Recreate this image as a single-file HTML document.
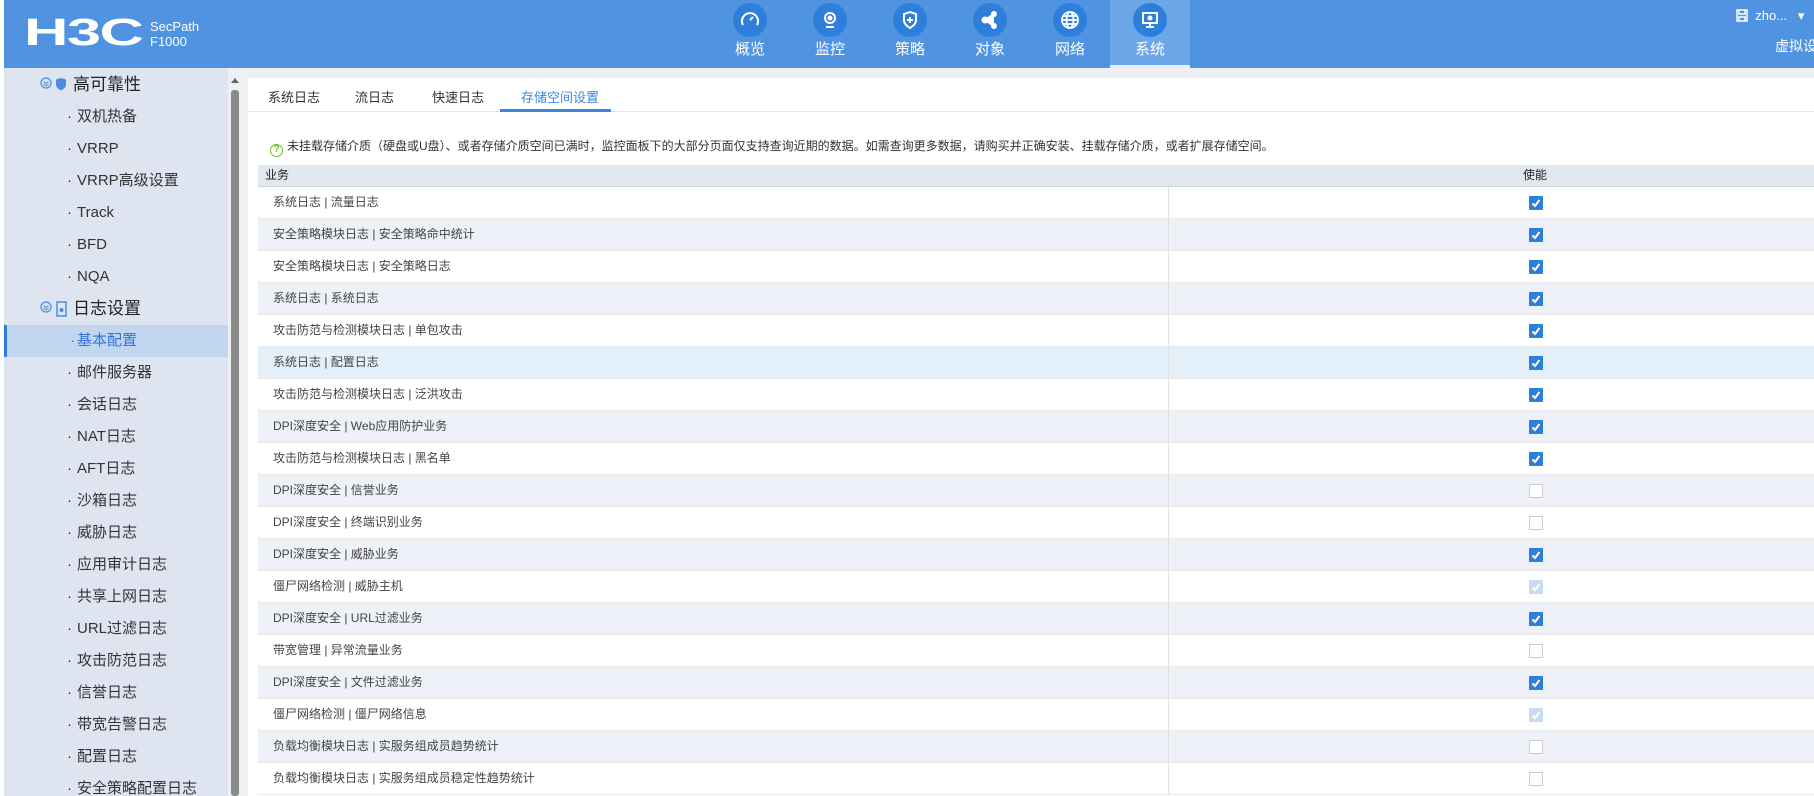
<!DOCTYPE html>
<html><head><meta charset="utf-8"><style>
*{margin:0;padding:0;box-sizing:border-box}
body{width:1814px;height:796px;overflow:hidden;background:#fff;font-family:"Liberation Sans","Noto Sans CJK SC",sans-serif;position:relative}
.hdr{position:absolute;left:4px;top:0;width:1810px;height:68px;background:#5093e0}
.logo{position:absolute;left:20px;top:12px;color:#fff;font:bold 38px "Liberation Sans",sans-serif;transform:scaleX(1.62);transform-origin:left;letter-spacing:-1px}
.sp{position:absolute;left:146px;top:19px;color:#fff;font-size:13px;line-height:15px}
.nav{position:absolute;top:0;width:80px;height:68px;text-align:center;color:#fff;font-size:15px}
.nav .c{width:34px;height:34px;border-radius:50%;background:#2e7fdc;margin:3px auto 0;display:flex;align-items:center;justify-content:center}
.nav .t{margin-top:1px}
.nav.act{background:#6aa6e8;border-bottom:3px solid #e8f0fb}
.user{position:absolute;left:1736px;top:8px;color:#fff;font-size:13px}
.vd{position:absolute;left:1775px;top:36px;color:#fff;font-size:14px;white-space:nowrap}
.side{position:absolute;left:4px;top:68px;width:224px;height:728px;background:#dfe5f0;overflow:hidden}
.gap{position:absolute;left:228px;top:68px;width:1586px;height:728px;background:#eef0f4}
.sb{position:absolute;left:231px;top:90px;width:8px;height:706px;background:#8a8a8a;border-radius:3px}
.si{position:absolute;left:0;width:224px;height:32px;line-height:32px;font-size:15px;color:#333;padding-left:63px}
.si:before{content:"·";position:absolute;left:63px}
.si span{margin-left:10px}
.si.g{padding-left:69px;font-size:17px;color:#222}
.si.g:before{content:none}
.si.a{background:#c3d6ef;border-left:3px solid #2f7fdc;color:#3274d4}
.panel{position:absolute;left:248px;top:78px;width:1566px;height:718px;background:#fff}
.tabs{position:absolute;left:0;top:0;width:100%;height:34px;border-bottom:1px solid #e3e6ee}
.tab{position:absolute;top:9px;font-size:13px;color:#333}
.tab.a{color:#3c86de}
.ul{position:absolute;left:252px;top:31px;width:111px;height:3px;background:#3c86de}
.note{position:absolute;left:22px;top:59px;font-size:12px;color:#333;white-space:nowrap}
.note i{display:inline-block;width:13px;height:13px;border:1.5px solid #6cc02e;border-radius:50%;color:#6cc02e;font-size:10px;line-height:10px;text-align:center;font-style:normal;font-weight:bold;vertical-align:-2px;margin-right:4px}
.th{position:absolute;left:10px;top:87px;width:1556px;height:22px;background:#e1e8f0;border-bottom:1px solid #cfd5de;font-size:12px;color:#222;line-height:21px}
.row{position:absolute;left:10px;width:1556px;height:32px;border-bottom:1px solid #e8e8e8;font-size:12px;color:#444;line-height:31px}
.row .d{position:absolute;left:910px;top:0;width:1px;height:32px;background:#e2e2e2}
.cb{position:absolute;left:1271px;top:9px;width:14px;height:14px;background:#2c7fdb;border-radius:1px}
.cb svg{position:absolute;left:2px;top:2px}
.cb.u{background:#fff;border:1px solid #ccc}
.cb.x{background:#c6dcf4}
</style></head><body>
<div class="hdr">
 <div class="logo">H3C</div>
 <div class="sp">SecPath<br>F1000</div>
</div>
<div class="nav" style="left:710px"><div class="c"><svg width="20" height="20" viewBox="0 0 20 20" fill="none" stroke="#fff" stroke-width="2"><path d="M3 15a8 8 0 1 1 14 0"/><path d="M10 10l3-3"/></svg></div><div class="t">概览</div></div>
<div class="nav" style="left:790px"><div class="c"><svg width="20" height="20" viewBox="0 0 20 20" fill="none" stroke="#fff" stroke-width="2"><circle cx="10" cy="8" r="5"/><circle cx="10" cy="8" r="1.5" fill="#fff"/><path d="M6 17h8"/></svg></div><div class="t">监控</div></div>
<div class="nav" style="left:870px"><div class="c"><svg width="20" height="20" viewBox="0 0 20 20" fill="none" stroke="#fff" stroke-width="2"><path d="M10 2l6 2v6c0 4-3 6-6 8-3-2-6-4-6-8V4z"/><path d="M10 7v6M7 10h6"/></svg></div><div class="t">策略</div></div>
<div class="nav" style="left:950px"><div class="c"><svg width="20" height="20" viewBox="0 0 20 20" fill="#fff" stroke="#fff" stroke-width="2"><circle cx="14" cy="4" r="2"/><circle cx="5" cy="10" r="2.5"/><circle cx="14" cy="16" r="2"/><path d="M14 4L5 10l9 6"/></svg></div><div class="t">对象</div></div>
<div class="nav" style="left:1030px"><div class="c"><svg width="20" height="20" viewBox="0 0 20 20" fill="none" stroke="#fff" stroke-width="1.8"><circle cx="10" cy="10" r="8"/><ellipse cx="10" cy="10" rx="3.5" ry="8"/><path d="M2 10h16M3.5 6h13M3.5 14h13"/></svg></div><div class="t">网络</div></div>
<div class="nav act" style="left:1110px"><div class="c"><svg width="20" height="20" viewBox="0 0 20 20" fill="none" stroke="#fff" stroke-width="2"><rect x="3" y="3" width="14" height="10"/><path d="M10 13v3M6 17h8"/><circle cx="10" cy="8" r="1.5" fill="#fff"/></svg></div><div class="t">系统</div></div>
<div class="user"><svg width="12" height="13" viewBox="0 0 12 13" fill="none" stroke="#fff" stroke-width="1.5" style="vertical-align:-2px"><rect x="1" y="1" width="10" height="11"/><path d="M3 1v4h6V1M3 12V8h6v4"/></svg>&nbsp; zho...&nbsp;&nbsp;&nbsp;▾</div>
<div class="vd">虚拟设备</div>
<div class="side">
 <div class="si g" style="top:1px"><svg style="position:absolute;left:36px;top:8px" width="30" height="16" viewBox="0 0 30 16"><circle cx="6" cy="6" r="5" fill="none" stroke="#4b8de0" stroke-width="1.2"/><path d="M3.5 4.5l2.5 2 2.5-2M3.5 7l2.5 2 2.5-2" fill="none" stroke="#4b8de0" stroke-width="1"/><path d="M21 1l5 1.5v5c0 3-2.5 4.5-5 6-2.5-1.5-5-3-5-6v-5z" fill="#4b8de0"/></svg>高可靠性</div>
 <div class="si" style="top:33px"><span>双机热备</span></div>
 <div class="si" style="top:65px"><span>VRRP</span></div>
 <div class="si" style="top:97px"><span>VRRP高级设置</span></div>
 <div class="si" style="top:129px"><span>Track</span></div>
 <div class="si" style="top:161px"><span>BFD</span></div>
 <div class="si" style="top:193px"><span>NQA</span></div>
 <div class="si g" style="top:225px"><svg style="position:absolute;left:36px;top:8px" width="30" height="17" viewBox="0 0 30 17"><circle cx="6" cy="6" r="5" fill="none" stroke="#4b8de0" stroke-width="1.2"/><path d="M3.5 4.5l2.5 2 2.5-2M3.5 7l2.5 2 2.5-2" fill="none" stroke="#4b8de0" stroke-width="1"/><rect x="17" y="1" width="9" height="14" fill="none" stroke="#4b8de0" stroke-width="1.5"/><circle cx="21.5" cy="9" r="2" fill="#4b8de0"/></svg>日志设置</div>
 <div class="si a" style="top:257px;padding-left:60px"><span>基本配置</span></div>
 <div class="si" style="top:289px"><span>邮件服务器</span></div>
 <div class="si" style="top:321px"><span>会话日志</span></div>
 <div class="si" style="top:353px"><span>NAT日志</span></div>
 <div class="si" style="top:385px"><span>AFT日志</span></div>
 <div class="si" style="top:417px"><span>沙箱日志</span></div>
 <div class="si" style="top:449px"><span>威胁日志</span></div>
 <div class="si" style="top:481px"><span>应用审计日志</span></div>
 <div class="si" style="top:513px"><span>共享上网日志</span></div>
 <div class="si" style="top:545px"><span>URL过滤日志</span></div>
 <div class="si" style="top:577px"><span>攻击防范日志</span></div>
 <div class="si" style="top:609px"><span>信誉日志</span></div>
 <div class="si" style="top:641px"><span>带宽告警日志</span></div>
 <div class="si" style="top:673px"><span>配置日志</span></div>
 <div class="si" style="top:705px"><span>安全策略配置日志</span></div>
</div>
<div class="gap"></div>
<div style="position:absolute;left:231px;top:78px;width:0;height:0;border-left:4px solid transparent;border-right:4px solid transparent;border-bottom:5px solid #666"></div>
<div class="sb"></div>
<div class="panel">
 <div class="tabs">
  <div class="tab" style="left:20px">系统日志</div>
  <div class="tab" style="left:107px">流日志</div>
  <div class="tab" style="left:184px">快速日志</div>
  <div class="tab a" style="left:273px">存储空间设置</div>
  <div class="ul"></div>
 </div>
 <div class="note"><i>?</i>未挂载存储介质（硬盘或U盘）、或者存储介质空间已满时，监控面板下的大部分页面仅支持查询近期的数据。如需查询更多数据，请购买并正确安装、挂载存储介质，或者扩展存储空间。</div>
 <div class="th"><span style="position:absolute;left:7px">业务</span><span style="position:absolute;left:1265px">使能</span></div>
 <div id="rows"></div>
</div>
<script>
var r=[["系统日志 | 流量日志",1],["安全策略模块日志 | 安全策略命中统计",1],["安全策略模块日志 | 安全策略日志",1],["系统日志 | 系统日志",1],["攻击防范与检测模块日志 | 单包攻击",1],["系统日志 | 配置日志",1],["攻击防范与检测模块日志 | 泛洪攻击",1],["DPI深度安全 | Web应用防护业务",1],["攻击防范与检测模块日志 | 黑名单",1],["DPI深度安全 | 信誉业务",0],["DPI深度安全 | 终端识别业务",0],["DPI深度安全 | 威胁业务",1],["僵尸网络检测 | 威胁主机",2],["DPI深度安全 | URL过滤业务",1],["带宽管理 | 异常流量业务",0],["DPI深度安全 | 文件过滤业务",1],["僵尸网络检测 | 僵尸网络信息",2],["负载均衡模块日志 | 实服务组成员趋势统计",0],["负载均衡模块日志 | 实服务组成员稳定性趋势统计",0]];
var h="",ck='<svg width="10" height="10" viewBox="0 0 10 10"><path d="M1.5 5.5l2.5 2.5 4.5-6" fill="none" stroke="#fff" stroke-width="2"/></svg>';
r.forEach(function(x,i){var bg=i==5?"#e3f0f9":(i%2?"#eef1f8":"#fff");
h+='<div class="row" style="top:'+(109+32*i)+'px;background:'+bg+'"><span style="position:absolute;left:15px">'+x[0]+'</span><div class="d"></div><div class="cb'+(x[1]==0?" u":x[1]==2?" x":"")+'">'+(x[1]?ck:"")+'</div></div>';});
document.getElementById("rows").innerHTML=h;
</script>
</body></html>
